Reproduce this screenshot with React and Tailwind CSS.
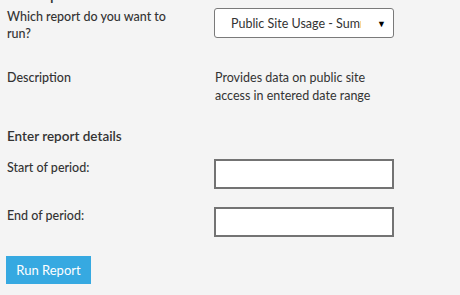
export default function App() {
  return (
    <div className="min-h-screen overflow-hidden bg-[#f4f4f4] pl-[7px] font-['Lato',sans-serif] text-[12.5px] leading-[17px] text-[#333]">
      <h2 className="-mt-[14px] text-[15px] leading-[17px] font-semibold">
        Run report
      </h2>

      <div className="mt-[5px] flex items-start">
        <div className="w-[207px] pr-[40px] font-medium leading-[17px]">
          Which report do you want to run?
        </div>
        <div className="flex h-[30px] w-[180px] items-center rounded-[3px] border border-[#7a7a7a] bg-white pl-[16px] pr-[7px]">
          <span className="mr-[16px] flex-1 overflow-hidden whitespace-nowrap text-[12.5px]">
            Public Site Usage - Summary
          </span>
          <span className="text-[9px] text-black">▼</span>
        </div>
      </div>

      <div className="mt-[27px] flex leading-[18px]">
        <div className="w-[207px] font-medium">Description</div>
        <div className="w-[170px] pl-px">
          Provides data on public site access in entered date range
        </div>
      </div>

      <div className="mt-[23px] text-[13.5px] font-semibold">Enter report details</div>

      <div className="mt-[14px] flex items-start">
        <div className="w-[207px] font-medium">Start of period:</div>
        <div className="h-[30px] w-[180px] border-2 border-[#737373] bg-white" />
      </div>

      <div className="mt-[18px] flex items-start">
        <div className="w-[207px] font-medium">End of period:</div>
        <div className="h-[30px] w-[180px] border-2 border-[#737373] bg-white" />
      </div>

      <button
        type="button"
        className="mt-[19px] -ml-px block h-[28px] w-[85px] bg-[#36a9e1] text-[13px] text-white"
      >
        Run Report
      </button>
    </div>
  );
}
